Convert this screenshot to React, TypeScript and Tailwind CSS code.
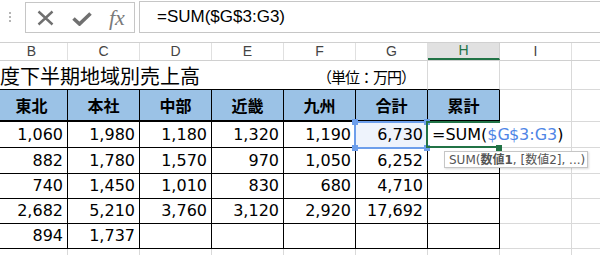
import React from "react";

const COLS = ["B", "C", "D", "E", "F", "G", "H", "I", ""];
const HEADS = ["東北", "本社", "中部", "近畿", "九州", "合計", "累計"];
const ROWS = [
  { h: "h-[26px]", v: ["1,060", "1,980", "1,180", "1,320", "1,190", "6,730"] },
  { h: "h-[26px]", v: ["882", "1,780", "1,570", "970", "1,050", "6,252"] },
  { h: "h-[25px]", v: ["740", "1,450", "1,010", "830", "680", "4,710"] },
  { h: "h-[25px]", v: ["2,682", "5,210", "3,760", "3,120", "2,920", "17,692"] },
  { h: "h-[25px]", v: ["894", "1,737", "", "", "", ""] },
];

const num = "font-['DejaVu_Sans',Verdana,sans-serif] text-[16px] text-black";
const jp = "font-['Noto_Sans_CJK_JP','Noto_Sans',sans-serif]";

function Handle({ className }: { className: string }) {
  return <div className={`absolute h-[6px] w-[6px] bg-[#6d9eeb] ${className}`} />;
}

export default function App() {
  return (
    <div className="relative h-[255px] w-[600px] overflow-hidden bg-white">
      {/* formula bar */}
      <div className="flex h-[33px] items-start">
        <div className="ml-[9px] mt-[12px] flex w-[3px] flex-col gap-[2px]">
          <span className="h-[2px] w-[2px] bg-[#b5b5b5]" />
          <span className="h-[2px] w-[2px] bg-[#b5b5b5]" />
          <span className="h-[2px] w-[2px] bg-[#b5b5b5]" />
        </div>
        <div className="ml-[13px] mt-[2px] flex h-[31px] w-[110px] items-center border border-[#c6c6c6] pl-[10px] text-[#707070]">
          <svg width="17" height="16" viewBox="0 0 17 16" className="ml-[1px]">
            <path d="M1.5 1.5 L15.5 14.5 M15.5 1.5 L1.5 14.5" stroke="#707070" strokeWidth="2.4" fill="none" />
          </svg>
          <svg width="20" height="14" viewBox="0 0 20 14" className="ml-[18px] mt-[3px]">
            <path d="M1.5 6.5 L7.5 12 L18.5 1.5" stroke="#707070" strokeWidth="3.6" fill="none" />
          </svg>
          <span className="ml-[17px] font-['Liberation_Serif',serif] text-[22px] italic leading-none text-[#7a7a7a]">
            fx
          </span>
        </div>
        <div className="ml-[4px] mt-[1px] flex h-[32px] flex-1 items-center border border-r-0 border-[#c6c6c6] pl-[17px] font-['Liberation_Sans',Arial,sans-serif] text-[17px] text-black">
          =SUM($G$3:G3)
        </div>
      </div>

      <div className="h-[9px]" />

      {/* column letters */}
      <div className="ml-[-4px] flex h-[19px] w-max border-y border-[#d0d0d0]">
        {COLS.map((c, i) => (
          <div
            key={i}
            className={
              c === "H"
                ? "flex w-[72px] items-center justify-center border-b-2 border-r border-b-[#217346] border-r-[#d0d0d0] bg-[#e1e1e1] font-['Liberation_Sans',Arial,sans-serif] text-[14px] text-[#217346]"
                : "flex w-[72px] items-center justify-center border-r border-[#e0e0e0] font-['Liberation_Sans',Arial,sans-serif] text-[14px] text-[#444]"
            }
          >
            {c}
          </div>
        ))}
      </div>

      {/* title row */}
      <div className="ml-[-4px] flex h-[29px] w-max">
        <div className={`flex w-[288px] items-end border-b border-black pb-[3px] pl-[4px] ${jp} text-[20px] leading-none text-black`}>
          度下半期地域別売上高
        </div>
        <div className={`flex w-[144px] items-end border-b border-r border-b-black border-r-[#d9d9d9] pb-[5px] pl-[33px] ${jp} text-[15px] leading-none tracking-[-1px] text-black`}>
          （単位：万円）
        </div>
        <div className="w-[72px] border-b border-r border-b-black border-r-[#d9d9d9]" />
        <div className="w-[72px] border-b border-r border-[#d9d9d9]" />
        <div className="w-[72px] border-b border-r border-[#d9d9d9]" />
      </div>

      {/* table header */}
      <div className="ml-[-4px] flex h-[32px] w-max">
        {HEADS.map((h) => (
          <div
            key={h}
            className={`flex w-[72px] items-center justify-center border-b-2 border-r border-black bg-[#9bc2e6] ${jp} text-[16px] font-bold text-black`}
          >
            {h}
          </div>
        ))}
        <div className="w-[72px] border-b border-r border-[#d9d9d9]" />
        <div className="w-[72px] border-b border-r border-[#d9d9d9]" />
      </div>

      {/* data rows */}
      {ROWS.map((r, ri) => (
        <div key={ri} className={`ml-[-4px] flex w-max ${r.h}`}>
          {r.v.map((v, ci) => (
            <div
              key={ci}
              className={
                ri === 0 && ci === 5
                  ? `flex w-[72px] items-center justify-end border-b border-r border-black bg-[#eef3fc] pr-[4px] ${num}`
                  : `flex w-[72px] items-center justify-end border-b border-r border-black pr-[4px] ${num}`
              }
            >
              {v}
            </div>
          ))}
          {ri === 0 ? (
            <div className={`flex w-[72px] items-center whitespace-nowrap border-b border-b-black pl-[4px] ${num}`}>
              <span>=SUM(</span>
              <span className="text-[#4f86e6]">$G</span>
              <span className="-mr-px inline-block h-[18px] w-px bg-black" />
              <span className="text-[#4f86e6]">$3:G3</span>
              <span>)</span>
            </div>
          ) : (
            <div className="w-[72px] border-b border-r border-black" />
          )}
          <div className="w-[72px] border-b border-r border-[#d9d9d9]" />
          <div className="w-[72px] border-b border-r border-[#d9d9d9]" />
        </div>
      ))}

      <div className="ml-[-4px] flex h-[10px] w-max">
        {COLS.map((c, i) => (
          <div key={i} className="w-[72px] border-r border-[#d9d9d9]" />
        ))}
      </div>

      {/* G3 reference highlight */}
      <div className="absolute left-[354px] top-[121px] h-[28px] w-[74px] border-2 border-[#6d9eeb]" />
      <Handle className="left-[352px] top-[119px]" />
      <Handle className="left-[424px] top-[119px]" />
      <Handle className="left-[352px] top-[145px]" />
      <Handle className="left-[424px] top-[145px]" />

      {/* active cell H3 */}
      <div className="absolute left-[426px] top-[121px] h-[27px] w-[74px] border-b-2 border-l-2 border-t-2 border-[#217346]" />
      <div className="absolute left-[496px] top-[145px] h-[6px] w-[6px] bg-[#217346]" />

      {/* tooltip */}
      <div className="absolute left-[444px] top-[151px] flex h-[17px] w-[144px] items-center border border-[#c6c6c6] bg-white pl-[4px] font-['DejaVu_Sans',Verdana,sans-serif] text-[12px] leading-none text-[#555] shadow-[1px_1px_2px_rgba(0,0,0,0.15)]">
        <span className="whitespace-nowrap">
          SUM(<b className={jp}>数値</b>
          <b>1</b>, [<span className={jp}>数値</span>2], ...)
        </span>
      </div>
    </div>
  );
}
